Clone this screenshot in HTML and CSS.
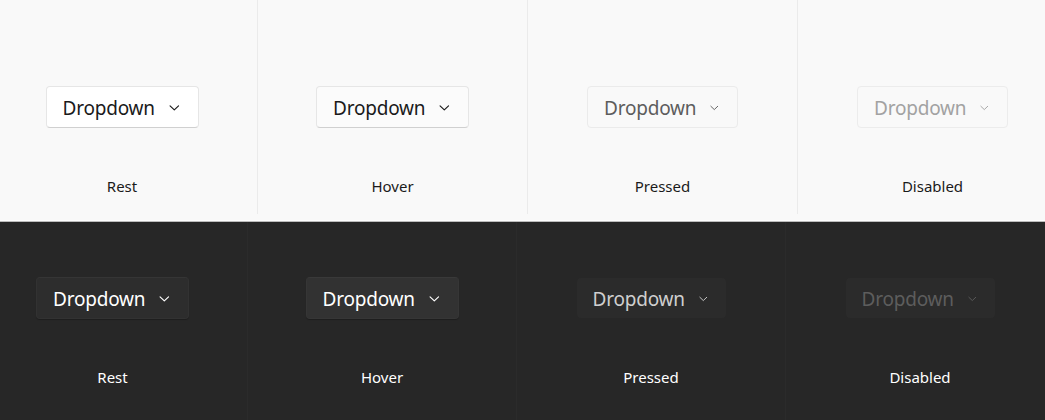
FILE: index.html
```html
<!DOCTYPE html>
<html lang="en">
<head>
    <meta charset="UTF-8">
    <title>Dropdown states</title>
    <link rel="stylesheet" href="styles.css">
</head>
<body>

    <!-- Светлая тема -->
    <section class="panel light">
        <div class="states">
            <div class="state">
                <div class="dropdown rest">Dropdown <svg class="chevron" viewBox="0 0 12 8"><path d="M1.2 1.6 L6 6.2 L10.8 1.6"/></svg></div>
                <div class="label">Rest</div>
            </div>
            <div class="state">
                <div class="dropdown hover">Dropdown <svg class="chevron" viewBox="0 0 12 8"><path d="M1.2 1.6 L6 6.2 L10.8 1.6"/></svg></div>
                <div class="label">Hover</div>
            </div>
            <div class="state">
                <div class="dropdown pressed">Dropdown <svg class="chevron" viewBox="0 0 12 8"><path d="M1.2 1.6 L6 6.2 L10.8 1.6"/></svg></div>
                <div class="label">Pressed</div>
            </div>
            <div class="state">
                <div class="dropdown disabled">Dropdown <svg class="chevron" viewBox="0 0 12 8"><path d="M1.2 1.6 L6 6.2 L10.8 1.6"/></svg></div>
                <div class="label">Disabled</div>
            </div>
        </div>
    </section>

    <!-- Темная тема -->
    <section class="panel dark">
        <div class="states">
            <div class="state">
                <div class="dropdown rest">Dropdown <svg class="chevron" viewBox="0 0 12 8"><path d="M1.2 1.6 L6 6.2 L10.8 1.6"/></svg></div>
                <div class="label">Rest</div>
            </div>
            <div class="state">
                <div class="dropdown hover">Dropdown <svg class="chevron" viewBox="0 0 12 8"><path d="M1.2 1.6 L6 6.2 L10.8 1.6"/></svg></div>
                <div class="label">Hover</div>
            </div>
            <div class="state">
                <div class="dropdown pressed">Dropdown <svg class="chevron" viewBox="0 0 12 8"><path d="M1.2 1.6 L6 6.2 L10.8 1.6"/></svg></div>
                <div class="label">Pressed</div>
            </div>
            <div class="state">
                <div class="dropdown disabled">Dropdown <svg class="chevron" viewBox="0 0 12 8"><path d="M1.2 1.6 L6 6.2 L10.8 1.6"/></svg></div>
                <div class="label">Disabled</div>
            </div>
        </div>
    </section>

</body>
</html>
```

FILE: styles.css
```css
/* Основные стили */
body {
    margin: 0;
    padding: 0;
    width: 1045px;
    height: 420px;
    overflow: hidden;
    font-family: "Noto Sans", "Open Sans", sans-serif;
}

.panel {
    overflow: hidden;
}

.states {
    display: flex;
}

.state {
    flex: 0 0 270px;
    display: flex;
    flex-direction: column;
    align-items: center;
    box-sizing: border-box;
}

.state + .state {
    border-left: 1px solid var(--divider);
}

.label {
    font-size: 15px;
    color: var(--label-color);
}

/* Кнопка-список */
.dropdown {
    display: flex;
    align-items: center;
    justify-content: space-between;
    box-sizing: border-box;
    height: 42px;
    padding: 1px 18px 0 16px;
    border-radius: 4px;
    font-size: 19px;
    letter-spacing: -0.2px;
}

.chevron {
    width: 12px;
    height: 8px;
    margin-left: 14px;
    fill: none;
    stroke: currentColor;
    stroke-width: 1.3;
    stroke-linecap: round;
    stroke-linejoin: round;
}

/* Светлая тема */
.light {
    --divider: #ebebeb;
    --label-color: #1b1b1b;
    height: 220px;
    background: #f9f9f9;
    border-bottom: 1px solid #ffffff;
    box-shadow: 0 1px 0 #bdbdbd;
    position: relative;
}

.light .states {
    margin-left: -13px;
    height: 214px;
}

.light .state {
    padding-top: 86px;
}

.light .label {
    margin-top: 48px;
}

.light .dropdown {
    width: 153px;
}

.light .rest {
    background: #ffffff;
    border: 1px solid #e6e6e6;
    border-bottom-color: #d0d0d0;
    color: #1a1a1a;
}

.light .hover {
    background: #fbfbfb;
    border: 1px solid #e6e6e6;
    border-bottom-color: #d0d0d0;
    color: #1a1a1a;
}

.light .pressed {
    width: 151px;
    background: #f9f9f9;
    border: 1px solid #ebebeb;
    color: #5d5d5d;
}

.light .disabled {
    width: 151px;
    background: #f9f9f9;
    border: 1px solid #ececec;
    color: #a2a2a2;
}

/* Темная тема */
.dark {
    --divider: #2b2b2b;
    --label-color: #ffffff;
    height: 199px;
    background: #272727;
}

.dark .states {
    margin-left: -22px;
    height: 199px;
}

.dark .state {
    flex-basis: 269px;
    padding-top: 56px;
}

.dark .label {
    margin-top: 48px;
}

.dark .dropdown {
    width: 153px;
}

.dark .rest {
    background: #2d2d2d;
    border: 1px solid #323232;
    border-top-color: #353535;
    color: #ffffff;
    box-shadow: 0 1px 1px rgba(0, 0, 0, 0.25);
}

.dark .hover {
    background: #323232;
    border: 1px solid #363636;
    border-top-color: #393939;
    color: #ffffff;
    box-shadow: 0 1px 1px rgba(0, 0, 0, 0.25);
}

.dark .pressed {
    width: 149px;
    height: 40px;
    margin: 1px 0;
    background: #2b2b2b;
    color: #cfcfcf;
}

.dark .disabled {
    width: 149px;
    height: 40px;
    margin: 1px 0;
    background: #2b2b2b;
    color: #5d5d5d;
}
```
